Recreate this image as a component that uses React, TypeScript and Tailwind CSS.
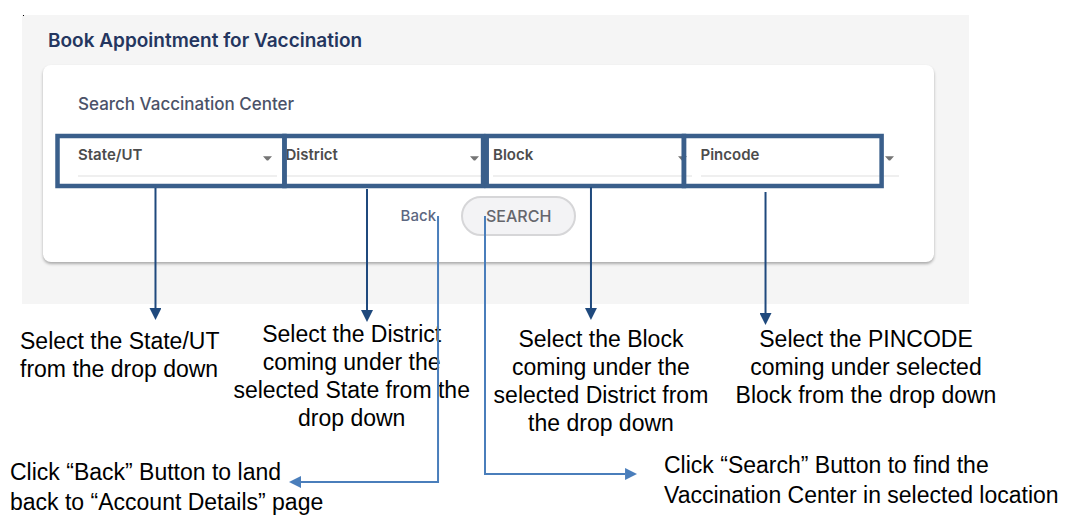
import React from "react";

const FIELDS = [
  { id: "state", label: "State/UT" },
  { id: "district", label: "District" },
  { id: "block", label: "Block" },
  { id: "pincode", label: "Pincode" },
];

function SelectField({ id, label }: { id: string; label: string }) {
  return (
    <div className="relative border-b-2 border-[#efefef]">
      <select
        id={id}
        aria-label={label}
        defaultValue=""
        className="block h-[35px] w-full appearance-none bg-transparent pb-[5px] text-[15px] font-semibold text-[#4c4c4c] outline-none"
      >
        <option value="">{label}</option>
      </select>
      <svg
        className="pointer-events-none absolute right-[5px] top-4 h-[5px] w-[9px]"
        viewBox="0 0 9 5"
        aria-hidden="true"
      >
        <path d="M0 0.3H9L5.2 4.6H3.8Z" fill="#757575" />
      </svg>
    </div>
  );
}

function BookingPanel() {
  return (
    <section className="ml-[22px] mr-24 bg-[#f5f5f5] pb-[42px] pl-[21px] pr-[35px] pt-3.5">
      <h1 className="pl-[5px] text-[19px] font-semibold leading-6 text-[#24365f]">
        Book Appointment for Vaccination
      </h1>
      <form
        className="mt-3 rounded-lg bg-white px-[35px] pb-[26px] pt-[27px] shadow-[0_2px_3px_rgba(0,0,0,0.3)]"
        onSubmit={(e) => e.preventDefault()}
      >
        <h2 className="text-[17px] font-medium leading-6 text-[#4b5268]">
          Search Vaccination Center
        </h2>
        <div className="mt-6 grid grid-cols-4 gap-[9px]">
          {FIELDS.map((f) => (
            <SelectField key={f.id} id={f.id} label={f.label} />
          ))}
        </div>
        <div className="mt-[19px] flex items-center justify-center gap-[25px]">
          <button type="button" className="text-[15px] font-medium text-[#5d6781]">
            Back
          </button>
          <button
            type="submit"
            className="h-10 rounded-full border-2 border-[#d6d6d8] bg-[#f3f3f5] px-[23px] text-base font-medium text-[#65666c]"
          >
            SEARCH
          </button>
        </div>
      </form>
    </section>
  );
}

function Callouts() {
  return (
    <svg
      className="pointer-events-none absolute inset-0 h-[525px] w-full"
      aria-hidden="true"
    >
      <defs>
        <marker
          id="dark"
          markerUnits="userSpaceOnUse"
          markerWidth="12"
          markerHeight="12"
          refX="0"
          refY="6"
          orient="auto"
        >
          <path d="M0 0L12 6L0 12Z" fill="#1f497d" />
        </marker>
        <marker
          id="light"
          markerUnits="userSpaceOnUse"
          markerWidth="12"
          markerHeight="12"
          refX="0"
          refY="6"
          orient="auto"
        >
          <path d="M0 0L12 6L0 12Z" fill="#4a7ebb" />
        </marker>
      </defs>
      <g fill="none" stroke="#3a5f8b" strokeWidth="4.5">
        <rect x="5.4%" y="136" width="21.31%" height="50" />
        <rect x="26.71%" y="136" width="18.65%" height="50" />
        <rect x="45.7%" y="136" width="18.52%" height="50" />
        <rect x="64.22%" y="136" width="18.56%" height="50" />
      </g>
      <g stroke="#1f497d" strokeWidth="2">
        <line x1="14.6%" y1="188" x2="14.6%" y2="308" markerEnd="url(#dark)" />
        <line x1="34.46%" y1="189" x2="34.46%" y2="310" markerEnd="url(#dark)" />
        <line x1="55.49%" y1="187" x2="55.49%" y2="308" markerEnd="url(#dark)" />
        <line x1="71.88%" y1="192" x2="71.88%" y2="313" markerEnd="url(#dark)" />
      </g>
      <g stroke="#4a7ebb" strokeWidth="2">
        <line x1="41.13%" y1="216" x2="41.13%" y2="483" />
        <line x1="41.13%" y1="482" x2="28.26%" y2="482" markerEnd="url(#light)" />
        <line x1="45.54%" y1="216" x2="45.54%" y2="475" />
        <line x1="45.54%" y1="474" x2="58.69%" y2="474" markerEnd="url(#light)" />
      </g>
      <rect x="23" y="15" width="1" height="1" fill="#000000" />
    </svg>
  );
}

export default function App() {
  return (
    <main className="relative bg-white pb-2 pt-[15px] font-['Inter',sans-serif]">
      <BookingPanel />
      <div className="whitespace-nowrap font-['Liberation_Sans',Arial,sans-serif] text-[23px] text-black">
        <div className="grid grid-cols-[215fr_231fr_264fr_270fr] pl-5 pr-[65px] pt-4 leading-7">
          <p className="pt-[7px]">
            Select the State/UT
            <br />
            from the drop down
          </p>
          <p className="flex flex-col items-center">
            <span>Select the District</span>
            <span>coming under the</span>
            <span>selected State from the</span>
            <span>drop down</span>
          </p>
          <p className="flex flex-col items-center pt-[5px]">
            <span>Select the Block</span>
            <span>coming under the</span>
            <span>selected District from</span>
            <span>the drop down</span>
          </p>
          <p className="flex flex-col items-center pt-[5px]">
            <span>Select the PINCODE</span>
            <span>coming under selected</span>
            <span>Block from the drop down</span>
          </p>
        </div>
        <div className="grid grid-cols-[654fr_401fr] pl-2.5 pt-[13px] leading-[30px]">
          <p className="pt-[7px]">
            Click “Back” Button to land
            <br />
            back to “Account Details” page
          </p>
          <p>
            Click “Search” Button to find the
            <br />
            Vaccination Center in selected location
          </p>
        </div>
      </div>
      <Callouts />
    </main>
  );
}
